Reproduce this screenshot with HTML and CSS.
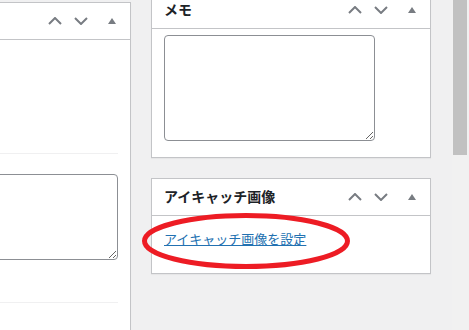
FILE: index.html
```html
<!DOCTYPE html>
<html lang="ja">
<head>
<meta charset="utf-8">
<title>投稿の編集</title>
<link rel="stylesheet" href="styles.css">
</head>
<body>
<div class="screen">
  <div class="columns">
    <div class="main">
      <div class="postbox">
        <div class="postbox-header">
          <h2 class="hndle"></h2>
          <div class="handle-actions">
            <button class="handle-btn order" type="button" aria-label="上へ移動"><svg width="14" height="8" viewBox="0 0 14 8"><polyline points="1,7 7,1 13,7"/></svg></button>
            <button class="handle-btn order" type="button" aria-label="下へ移動"><svg width="14" height="8" viewBox="0 0 14 8"><polyline points="1,1 7,7 13,1"/></svg></button>
            <button class="handle-btn toggle" type="button" aria-label="パネルを切り替え"><svg width="8" height="6" viewBox="0 0 8 6"><polygon points="0,6 4,0 8,6"/></svg></button>
          </div>
        </div>
        <div class="inside main-inside">
          <div class="spacer-top"></div>
          <div class="rule"></div>
          <textarea class="field main-field"></textarea>
          <div class="rule rule-bottom"></div>
        </div>
      </div>
    </div>
    <div class="side">
      <div class="postbox">
        <div class="postbox-header">
          <h2 class="hndle">メモ</h2>
          <div class="handle-actions">
            <button class="handle-btn order" type="button" aria-label="上へ移動"><svg width="14" height="8" viewBox="0 0 14 8"><polyline points="1,7 7,1 13,7"/></svg></button>
            <button class="handle-btn order" type="button" aria-label="下へ移動"><svg width="14" height="8" viewBox="0 0 14 8"><polyline points="1,1 7,7 13,1"/></svg></button>
            <button class="handle-btn toggle" type="button" aria-label="パネルを切り替え"><svg width="8" height="6" viewBox="0 0 8 6"><polygon points="0,6 4,0 8,6"/></svg></button>
          </div>
        </div>
        <div class="inside memo-inside">
          <textarea class="field memo-field"></textarea>
        </div>
      </div>
      <div class="postbox">
        <div class="postbox-header">
          <h2 class="hndle">アイキャッチ画像</h2>
          <div class="handle-actions">
            <button class="handle-btn order" type="button" aria-label="上へ移動"><svg width="14" height="8" viewBox="0 0 14 8"><polyline points="1,7 7,1 13,7"/></svg></button>
            <button class="handle-btn order" type="button" aria-label="下へ移動"><svg width="14" height="8" viewBox="0 0 14 8"><polyline points="1,1 7,7 13,1"/></svg></button>
            <button class="handle-btn toggle" type="button" aria-label="パネルを切り替え"><svg width="8" height="6" viewBox="0 0 8 6"><polygon points="0,6 4,0 8,6"/></svg></button>
          </div>
        </div>
        <div class="inside thumb-inside">
          <p class="set-thumb"><a href="#">アイキャッチ画像を設定</a></p>
        </div>
      </div>
    </div>
  </div>
  <div class="scrollbar"><div class="scroll-thumb"></div></div>
  <svg class="annotation" width="469" height="330" viewBox="0 0 469 330">
    <ellipse cx="246" cy="241" rx="101.5" ry="25.5"/>
  </svg>
</div>
</body>
</html>
```

FILE: styles.css
```css
html, body {
  margin: 0;
  padding: 0;
  overflow: hidden;
}

body {
  background: #f0f0f1;
  font-family: "Noto Sans CJK JP", "Noto Sans", sans-serif;
  color: #1d2327;
  font-size: 13px;
}

.screen {
  position: relative;
  display: flex;
  width: 469px;
  height: 330px;
  overflow: hidden;
}

.columns {
  flex: 1;
  display: flex;
  gap: 20px;
  padding-right: 21px;
  min-width: 0;
}

.main {
  flex: 1;
  min-width: 0;
  margin-left: -200px;
  margin-top: 2px;
}

.side {
  width: 280px;
  flex: none;
  margin-top: -9px;
  display: flex;
  flex-direction: column;
  gap: 20px;
}

.postbox {
  background: #fff;
  border: 1px solid #c3c4c7;
  box-shadow: 0 1px 1px rgba(0, 0, 0, 0.04);
}

.main .postbox {
  min-height: 400px;
}

.postbox-header {
  height: 36px;
  display: flex;
  align-items: center;
  justify-content: space-between;
  border-bottom: 1px solid #c3c4c7;
}

.hndle {
  margin: 0;
  padding: 0 12px;
  font-size: 14px;
  font-weight: 700;
  line-height: 1.4;
  color: #1d2327;
}

.handle-actions {
  display: flex;
  height: 36px;
}

.handle-btn {
  height: 36px;
  padding: 0;
  margin: 0;
  border: 0;
  background: transparent;
  display: flex;
  align-items: center;
  justify-content: center;
}

.handle-btn.order {
  width: 26px;
}

.handle-btn.toggle {
  width: 36px;
}

.handle-btn polyline {
  fill: none;
  stroke: #787c82;
  stroke-width: 2;
}

.handle-btn polygon {
  fill: #787c82;
}

.inside {
  padding: 0 12px;
}

.field {
  display: block;
  box-sizing: border-box;
  border: 1px solid #8c8f94;
  border-radius: 4px;
  background: #fff;
  margin: 0;
  font: inherit;
}

.spacer-top {
  height: 113px;
}

.rule {
  height: 1px;
  background: #f0f0f1;
}

.main-field {
  width: 100%;
  height: 86px;
  margin-top: 20px;
}

.rule-bottom {
  margin-top: 42px;
}

.memo-inside {
  padding: 6px 12px 16px;
}

.memo-field {
  width: 211px;
  height: 106px;
}

.thumb-inside {
  padding: 0 12px 11px;
}

.set-thumb {
  margin: 13px 0;
  line-height: 20px;
  font-size: 13px;
}

.set-thumb a {
  color: #2271b1;
  text-decoration: underline;
}

.scrollbar {
  width: 17px;
  flex: none;
  background: #f1f1f1;
  padding-left: 1px;
  box-sizing: border-box;
}

.scroll-thumb {
  width: 14px;
  height: 155px;
  background: #c1c1c1;
}

.annotation {
  position: absolute;
  left: 0;
  top: 0;
  pointer-events: none;
}

.annotation ellipse {
  fill: none;
  stroke: #ed1c24;
  stroke-width: 5;
}
```
